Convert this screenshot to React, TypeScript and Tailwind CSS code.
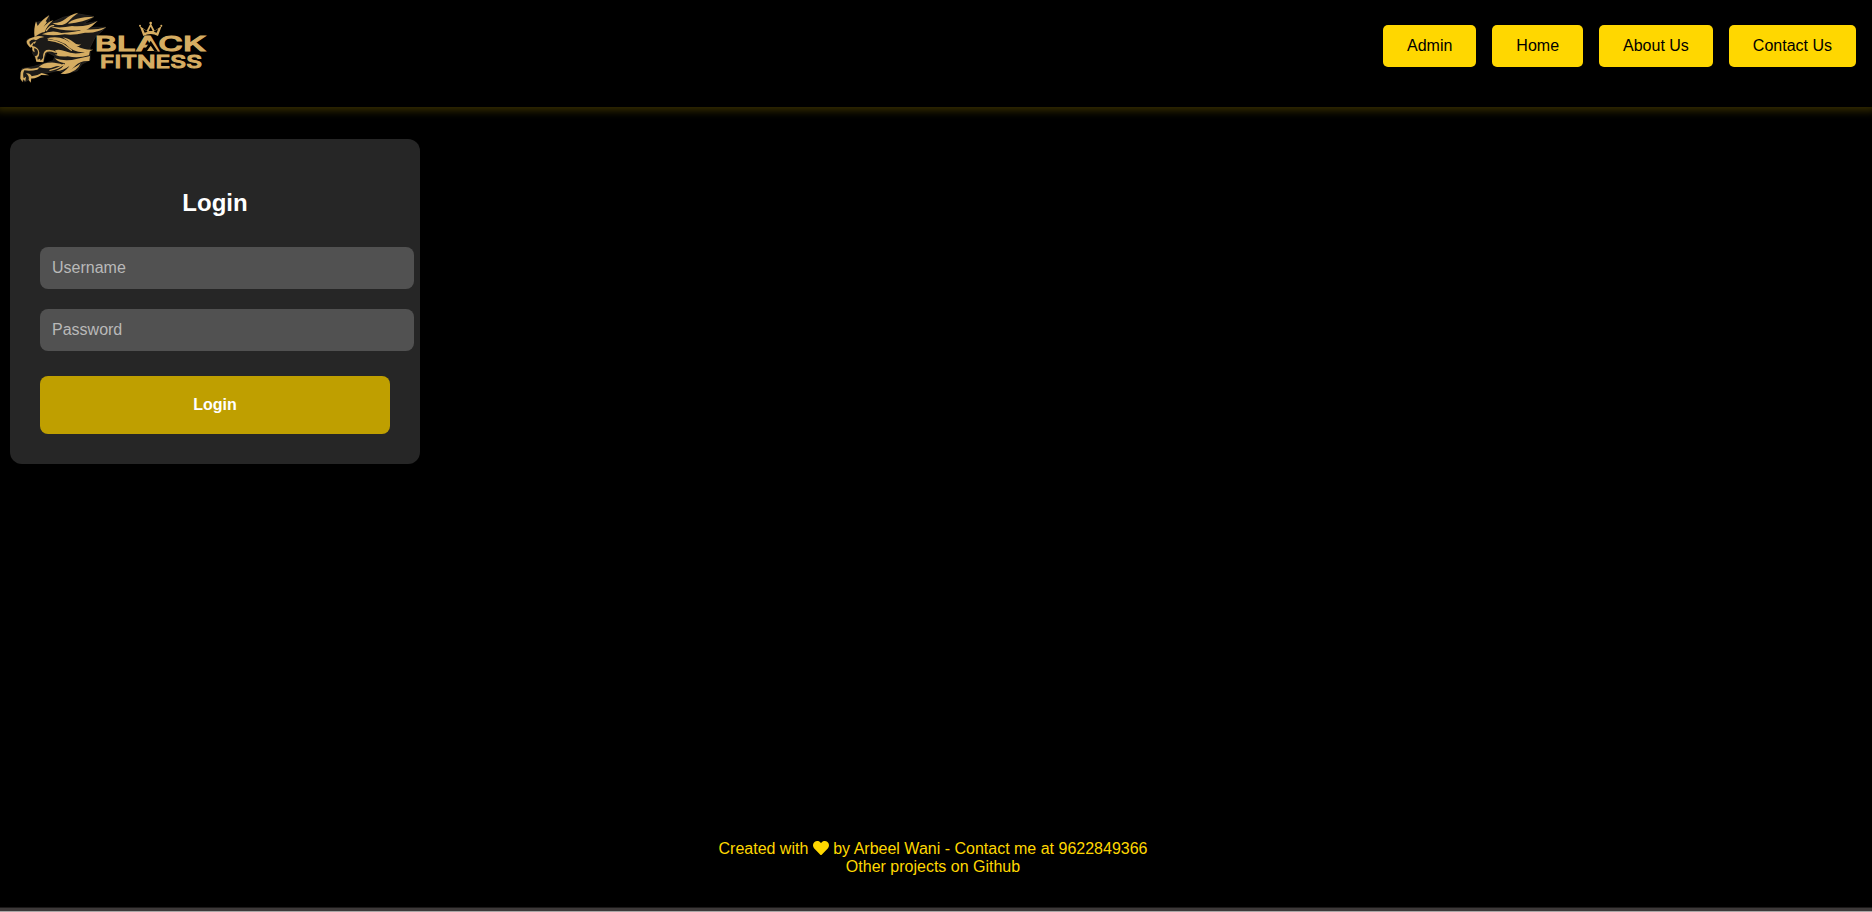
import { FaHeart } from "react-icons/fa";

const NAV_ITEMS = ["Admin", "Home", "About Us", "Contact Us"];

function Logo() {
  return (
    <svg className="block h-[107px] w-[230px]" viewBox="0 0 690 321" aria-label="Black Fitness">
      {/* dark mane and face */}
      <path
        fill="#1c1a18"
        stroke="#26231f"
        strokeWidth="3"
        strokeLinejoin="round"
        d="M104 112 L82 118 L80 130 L100 142 L98 160 L112 182 L130 184 L140 156 L165 168 L160 182 L100 200 L66 206 L62 232 L74 246 L92 236 L122 222 L175 212 L200 220 L232 212 L246 192 L270 180 L270 142 L285 112 L318 82 L285 82 L250 88 L292 64 L250 72 L282 50 L236 42 L190 52 L150 70 L146 46 L124 64 L108 68 Z"
      />
      <g fill="#d6ad62">
        {/* ear tuft and forehead */}
        <path d="M104 112 Q100 88 108 64 L113 78 Q125 60 148 46 L137 64 L141 66 L130 82 Q146 64 160 61 Q142 76 134 96 Q118 98 104 112Z" />
        {/* upper locks */}
        <path d="M157 69 Q178 71 196 57 Q211 43 235 38 Q215 52 204 65 Q192 77 174 75 Q164 74 157 69Z" />
        <path d="M203 71 Q220 51 282 50 Q252 66 203 71Z" />
        <path d="M146 79 Q180 86 216 78 Q262 82 292 63 Q264 94 230 101 Q239 96 243 90 Q190 96 146 79Z" />
        <path d="M126 103 Q155 88 184 99 Q224 98 254 88 Q286 91 319 82 Q290 101 255 98 Q220 107 194 103 Q160 109 126 103Z" />
        {/* inner mane */}
        <path d="M140 115 Q171 107 194 118 Q211 128 231 139 Q253 151 280 149 Q250 163 221 151 Q207 144 196 132 Q169 120 140 115Z" />
        <path d="M188 112 Q207 115 221 127 Q233 138 244 131 Q235 144 219 136 Q205 122 188 112Z" />
        <path d="M164 152 Q176 145 196 154 Q219 164 248 158 L270 151 L267 166 Q235 176 203 169 Q183 172 164 164 Q180 164 164 152Z" />
        {/* brow, nose and jaws */}
        <path d="M103 111 Q116 105 133 111 Q119 112 108 121 Q98 114 88 125 Q87 132 96 139 L91 143 Q80 134 80 123 Q87 114 103 111Z" />
        <path d="M91 137 Q96 126 109 124 L104 131 L100 130 L97 138 Q116 141 118 158 Q118 168 112 173 L113 179 L120 176 L122 182 L129 174 Q128 156 139 150 Q155 146 174 158 L164 158 Q145 151 136 159 Q132 171 130 187 L109 185 L105 168 Q114 169 114 156 Q112 145 102 145 L104 157 Q95 153 97 144Z" />
        {/* lower mane */}
        <path d="M164 175 Q198 186 232 176 L270 168 L268 183 Q241 181 226 197 Q211 215 183 221 Q204 206 208 198 Q189 213 168 213 Q190 204 195 190 Q174 187 164 175Z" />
        <path d="M242 190 Q232 216 195 222 L181 221 Q218 209 242 190Z" />
        {/* foreleg and paw */}
        <path d="M116 201 Q132 186 163 188 Q182 189 196 198 Q171 196 153 204 Q135 207 116 201Z" />
        <path d="M62 217 Q65 205 82 205 Q98 208 119 202 L112 209 Q91 214 73 211 Q67 220 71 235 L78 230 L76 244 L69 238 L68 247 L61 236Z" />
        <path d="M78 220 Q91 219 95 229 Q109 229 125 219 L148 226 L124 225 Q107 237 94 235 L92 248 L86 240 Q89 228 78 220Z" />
      </g>
      <g fill="none" stroke="#d6ad62" strokeWidth="4" strokeLinecap="round">
        <path d="M161 77 Q150 76 139 92" />
        <path d="M145 120 Q166 121 188 132 Q205 144 214 151" />
        <path d="M150 211 Q174 207 191 193" />
      </g>
      <g fill="#d6ad62" stroke="#d6ad62" strokeWidth="3" className="font-['Inter',sans-serif] font-medium">
        <text x="284" y="152" fontSize="60" textLength="334" lengthAdjust="spacingAndGlyphs">BLACK</text>
        <text x="300" y="205" fontSize="51" textLength="306" lengthAdjust="spacingAndGlyphs">FITNESS</text>
      </g>
      {/* open foot of the A */}
      <path fill="#000" d="M452 122 L474 155 H430 Z" />
      <path fill="#d6ad62" d="M452 137 L463 153 H441 Z" />
      {/* crown */}
      <g fill="#d6ad62">
        <path
          fillRule="evenodd"
          d="M430 108 L419 78 L440 92 L452 69 L464 92 L485 78 L474 108 Q452 96 430 108Z M434 98 L443 95 L429 86Z M470 98 L461 95 L475 86Z M452 80 L446 93 H458Z"
        />
        <circle cx="452" cy="69" r="4" />
        <circle cx="420" cy="77" r="3" />
        <circle cx="484" cy="77" r="3" />
      </g>
    </svg>
  );
}

function Field({ type, placeholder }: { type: string; placeholder: string }) {
  return (
    <input
      type={type}
      placeholder={placeholder}
      className="mb-5 block h-[42px] w-[374px] rounded-lg bg-[#515151] px-3 text-base text-white outline-none placeholder:text-[#b9b9b9]"
    />
  );
}

export default function App() {
  return (
    <div className="flex h-[912px] flex-col overflow-hidden bg-black font-['Liberation_Sans',Arial,sans-serif] text-base leading-[18px]">
      <header className="flex h-[107px] shrink-0 items-start justify-between bg-black shadow-[0_0_8px_4px_rgba(255,215,0,0.2)]">
        <Logo />
        <nav className="flex gap-4 pt-[25px] pr-4">
          {NAV_ITEMS.map((item) => (
            <a key={item} href="#" className="rounded-[5px] bg-[#ffd700] px-6 py-3 text-black">
              {item}
            </a>
          ))}
        </nav>
      </header>

      <main className="grow px-2.5 pt-8">
        <form className="h-[325px] w-[410px] rounded-xl bg-[#262626] px-[30px] pt-[50px]">
          <h2 className="mb-[30px] text-center text-2xl leading-7 font-bold text-white">Login</h2>
          <Field type="text" placeholder="Username" />
          <Field type="password" placeholder="Password" />
          <button
            type="button"
            className="mt-[25px] block h-[58px] w-[350px] rounded-lg bg-[#bf9f00] font-bold text-white"
          >
            Login
          </button>
        </form>
      </main>

      <footer className="h-[67px] shrink-0 pr-1.5 text-center text-[#ffd700]">
        <p>
          Created with <FaHeart className="inline size-4 align-[-2px]" /> by Arbeel Wani - Contact me at 9622849366
        </p>
        <p>Other projects on Github</p>
      </footer>
      <div className="h-[5px] shrink-0 border-t border-b border-t-[#1c1a1a] border-b-[#a9a5a5] bg-[#3d3939]" />
    </div>
  );
}
